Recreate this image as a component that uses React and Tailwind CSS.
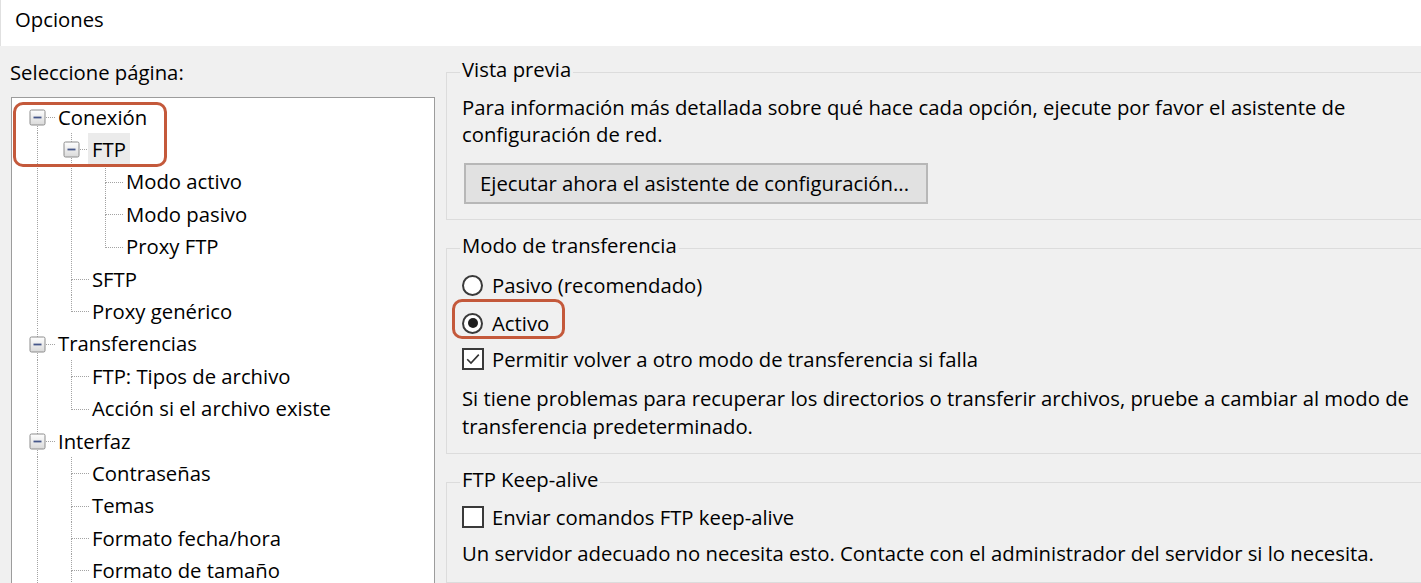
const tree = [
  { label: "Conexión", level: 0, exp: true, pass: [], first: true },
  { label: "FTP", level: 1, exp: true, pass: [0], selected: true },
  { label: "Modo activo", level: 2, pass: [0, 1] },
  { label: "Modo pasivo", level: 2, pass: [0, 1] },
  { label: "Proxy FTP", level: 2, pass: [0, 1], last: true },
  { label: "SFTP", level: 1, pass: [0] },
  { label: "Proxy genérico", level: 1, pass: [0], last: true },
  { label: "Transferencias", level: 0, exp: true, pass: [] },
  { label: "FTP: Tipos de archivo", level: 1, pass: [0] },
  { label: "Acción si el archivo existe", level: 1, pass: [0], last: true },
  { label: "Interfaz", level: 0, exp: true, pass: [] },
  { label: "Contraseñas", level: 1, pass: [0] },
  { label: "Temas", level: 1, pass: [0] },
  { label: "Formato fecha/hora", level: 1, pass: [0] },
  { label: "Formato de tamaño", level: 1, pass: [0] },
];

const ROW_H = 32.4;
const DOT = "#a3a3a3";

function Guides({ item }) {
  const cy = 16.5;
  const w = 46 + 34 * item.level;
  const lx = (l) => 25.5 + 34 * l;
  const x = lx(item.level);
  return (
    <svg width={w} height={ROW_H} className="shrink-0">
      <defs>
        <linearGradient id="exp" x1="0" y1="0" x2="0" y2="1">
          <stop offset="0" stopColor="#ffffff" />
          <stop offset="1" stopColor="#d9d9d9" />
        </linearGradient>
      </defs>
      <g shapeRendering="crispEdges" stroke={DOT} strokeDasharray="1 1">
        {item.pass.map((l) => (
          <line key={l} x1={lx(l)} y1={0} x2={lx(l)} y2={ROW_H} />
        ))}
        {!item.first && <line x1={x} y1={0} x2={x} y2={cy} />}
        {!item.last && <line x1={x} y1={cy} x2={x} y2={ROW_H} />}
        <line x1={x} y1={cy} x2={x + 18} y2={cy} />
      </g>
      {item.exp && (
        <g>
          <rect x={x - 7.5} y={cy - 7.5} width={15} height={15} rx={1.5} fill="url(#exp)" stroke="#8c8c8c" />
          <line x1={x - 4} y1={cy} x2={x + 4} y2={cy} stroke="#46578a" strokeWidth="1.8" />
        </g>
      )}
    </svg>
  );
}

function Radio({ checked, children }) {
  return (
    <div className="flex items-center h-[27px]">
      <span className="w-[21px] h-[21px] rounded-full border-2 border-[#3a3a3a] bg-white flex items-center justify-center shrink-0">
        {checked && <span className="w-[10px] h-[10px] rounded-full bg-[#1e1e1e]" />}
      </span>
      <span className="ml-[9px] whitespace-nowrap">{children}</span>
    </div>
  );
}

function Check({ checked, children }) {
  return (
    <div className="flex items-center h-[27px]">
      <span className="w-[22px] h-[22px] border-2 border-[#3a3a3a] bg-white flex items-center justify-center shrink-0">
        {checked && (
          <svg width="16" height="16" viewBox="0 0 16 16">
            <path d="M2.2 8.2 L6 12 L13.8 3.6" fill="none" stroke="#333" strokeWidth="1.6" />
          </svg>
        )}
      </span>
      <span className="ml-[8px] whitespace-nowrap">{children}</span>
    </div>
  );
}

function Group({ title, className, children }) {
  return (
    <fieldset className={`border border-[#dcdcdc] px-[15px] ${className}`}>
      <legend className="-ml-[2px] px-[2px] pb-[6px] leading-[27px]">{title}</legend>
      {children}
    </fieldset>
  );
}

export default function App() {
  return (
    <div className="w-[1421px] h-[583px] overflow-hidden bg-[#f0f0f0] text-[20.3px] leading-[27px] text-black font-['Open_Sans','Noto_Sans',sans-serif]">
      <div className="h-[46px] bg-white border-l border-[#e0e0e0] pl-[14px] pt-[6px]">Opciones</div>

      <div className="flex h-[537px]">
        <div className="w-[435px] shrink-0 pl-[11px] flex flex-col">
          <div className="mt-[13px] -ml-[1px]">Seleccione página:</div>
          <div className="relative mt-[11px] flex-1 -mb-[4px] bg-white border border-[#9c9c9c] pt-[3px]">
            {tree.map((item) => (
              <div key={item.label} className="flex items-center h-[32.4px] whitespace-nowrap">
                <Guides item={item} />
                {item.selected ? (
                  <span className="-ml-[4px] px-[4px] h-full flex items-center bg-[#ebebeb]">{item.label}</span>
                ) : (
                  <span>{item.label}</span>
                )}
              </div>
            ))}
            <span className="absolute left-[1px] top-[4px] w-[154px] h-[65px] border-[3px] border-[#c4593b] rounded-[10px]" />
          </div>
        </div>

        <div className="flex-1 ml-[11px] -mr-[2px] flex flex-col">
          <Group title="Vista previa" className="mt-[10px] pb-[15px]">
            <p className="mt-[5px] whitespace-nowrap">
              Para información más detallada sobre qué hace cada opción, ejecute por favor el asistente de
              <br />
              configuración de red.
            </p>
            <div className="mt-[14.5px] ml-[2px]">
              <button className="w-[464px] h-[41px] bg-[#e1e1e1] border-2 border-[#b7b7b7] text-left pl-[14px] whitespace-nowrap">
                Ejecutar ahora el asistente de configuración...
              </button>
            </div>
          </Group>

          <Group title="Modo de transferencia" className="mt-[12px] pb-[13px]">
            <div className="mt-[7px]">
              <Radio>Pasivo (recomendado)</Radio>
            </div>
            <div className="mt-[11px] relative">
              <Radio checked>Activo</Radio>
              <span className="absolute left-[-10px] top-[-10.5px] w-[113px] h-[40px] border-[3px] border-[#c4593b] rounded-[10px]" />
            </div>
            <div className="mt-[9px]">
              <Check checked>Permitir volver a otro modo de transferencia si falla</Check>
            </div>
            <p className="mt-[11px] leading-[28px] whitespace-nowrap">
              Si tiene problemas para recuperar los directorios o transferir archivos, pruebe a cambiar al modo de
              <br />
              transferencia predeterminado.
            </p>
          </Group>

          <Group title="FTP Keep-alive" className="mt-[12px] pb-[15px]">
            <div className="mt-[5px]">
              <Check>Enviar comandos FTP keep-alive</Check>
            </div>
            <p className="mt-[9px] whitespace-nowrap">
              Un servidor adecuado no necesita esto. Contacte con el administrador del servidor si lo necesita.
            </p>
          </Group>
        </div>
      </div>
    </div>
  );
}
